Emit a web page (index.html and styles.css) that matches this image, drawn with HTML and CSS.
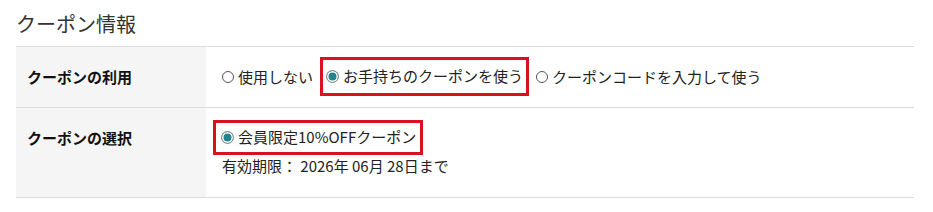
FILE: index.html
```html
<!DOCTYPE html>
<html lang="ja">
<head>
<meta charset="utf-8">
<link rel="stylesheet" href="styles.css">
</head>
<body>
<div class="section">
  <h2 class="title">クーポン情報</h2>
  <div class="table">
    <div class="row">
      <div class="label">クーポンの利用</div>
      <div class="value value-use">
        <span class="opt"><span class="radio"></span>使用しない</span>
        <span class="opt opt-hl"><span class="radio checked"></span>お手持ちのクーポンを使う</span>
        <span class="opt"><span class="radio"></span>クーポンコードを入力して使う</span>
      </div>
    </div>
    <div class="row">
      <div class="label">クーポンの選択</div>
      <div class="value value-select">
        <span class="opt opt-hl2"><span class="radio checked"></span>会員限定10%OFFクーポン</span>
        <div class="expiry">有効期限： 2026年 06月 28日まで</div>
      </div>
    </div>
  </div>
</div>
</body>
</html>
```
FILE: styles.css
```css
html, body {
  margin: 0;
  padding: 0;
  background: #fff;
}
body {
  font-family: "Noto Sans CJK JP", "Noto Sans", sans-serif;
  color: #222;
}
.section {
  margin-left: 16px;
  width: 898px;
}
.title {
  margin: 10px 0 8px;
  font-size: 20px;
  line-height: 28px;
  font-weight: 400;
  color: #333;
}
.table {
  border-top: 1px solid #dcdcdc;
}
.row {
  display: flex;
  border-bottom: 1px solid #dcdcdc;
}
.label {
  width: 179px;
  flex: none;
  background: #f5f5f5;
  padding: 19px 0 0 11px;
  font-size: 15px;
  line-height: 22px;
  font-weight: 700;
  color: #111;
}
.value {
  flex: 1;
  font-size: 15px;
  line-height: 22px;
  padding-left: 16px;
}
.value-use {
  display: flex;
  align-items: center;
  gap: 7px;
  padding-top: 10px;
  padding-bottom: 11px;
}
.value-select {
  padding-top: 12px;
  padding-bottom: 20px;
}
.opt {
  display: inline-flex;
  align-items: center;
  white-space: nowrap;
}
.opt-hl {
  border: 3px solid #d9101e;
  padding: 5px 3px 6px 3px;
}
.opt-hl2 {
  border: 3px solid #d9101e;
  padding: 3px 4px 4px 5px;
  margin-left: -9px;
}
.radio {
  width: 10px;
  height: 10px;
  border: 1px solid #555;
  border-radius: 50%;
  margin-right: 4px;
  flex: none;
}
.radio.checked {
  width: 11px;
  height: 11px;
  border: 1px solid #8c8c8c;
  background: #23858f;
  box-shadow: inset 0 0 0 1.5px #fff;
}
.expiry {
  color: #222;
}
```
